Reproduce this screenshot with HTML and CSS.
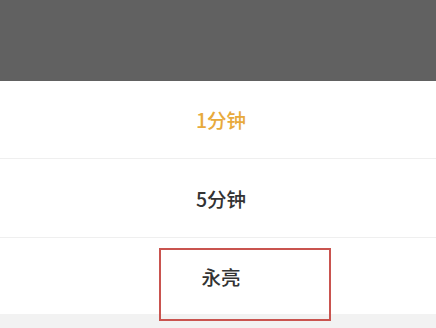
FILE: index.html
```html
<!DOCTYPE html>
<html lang="zh">
<head>
<meta charset="utf-8">
<link rel="stylesheet" href="styles.css">
</head>
<body>
<div class="mask"></div>
<div class="sheet">
  <div class="option active">1分钟</div>
  <div class="option">5分钟</div>
  <div class="option last"><span>永亮</span><div class="highlight"></div></div>
</div>
<div class="footer"></div>
</body>
</html>
```
FILE: styles.css
```css
html, body {
  margin: 0;
  padding: 0;
  width: 436px;
  height: 328px;
  overflow: hidden;
  background: #ffffff;
  font-family: "Noto Sans CJK SC", "Noto Sans", sans-serif;
}
.mask {
  height: 81px;
  background: #616161;
}
.sheet {
  display: flex;
  flex-direction: column;
  background: #ffffff;
}
.option {
  position: relative;
  height: 77px;
  display: flex;
  align-items: center;
  justify-content: center;
  padding-left: 6px;
  font-size: 19.5px;
  font-weight: 500;
  color: #333333;
  border-bottom: 1px solid #efefef;
}
.option + .option {
  height: 78px;
}
.option.last {
  height: 76px;
  border-bottom: none;
}
.option.active {
  color: #e8aa3c;
}
.footer {
  height: 14px;
  background: #f2f2f2;
}
.highlight {
  position: absolute;
  left: 159px;
  top: 10px;
  width: 168px;
  height: 69px;
  border: 2px solid #c9544f;
  z-index: 2;
}
```
